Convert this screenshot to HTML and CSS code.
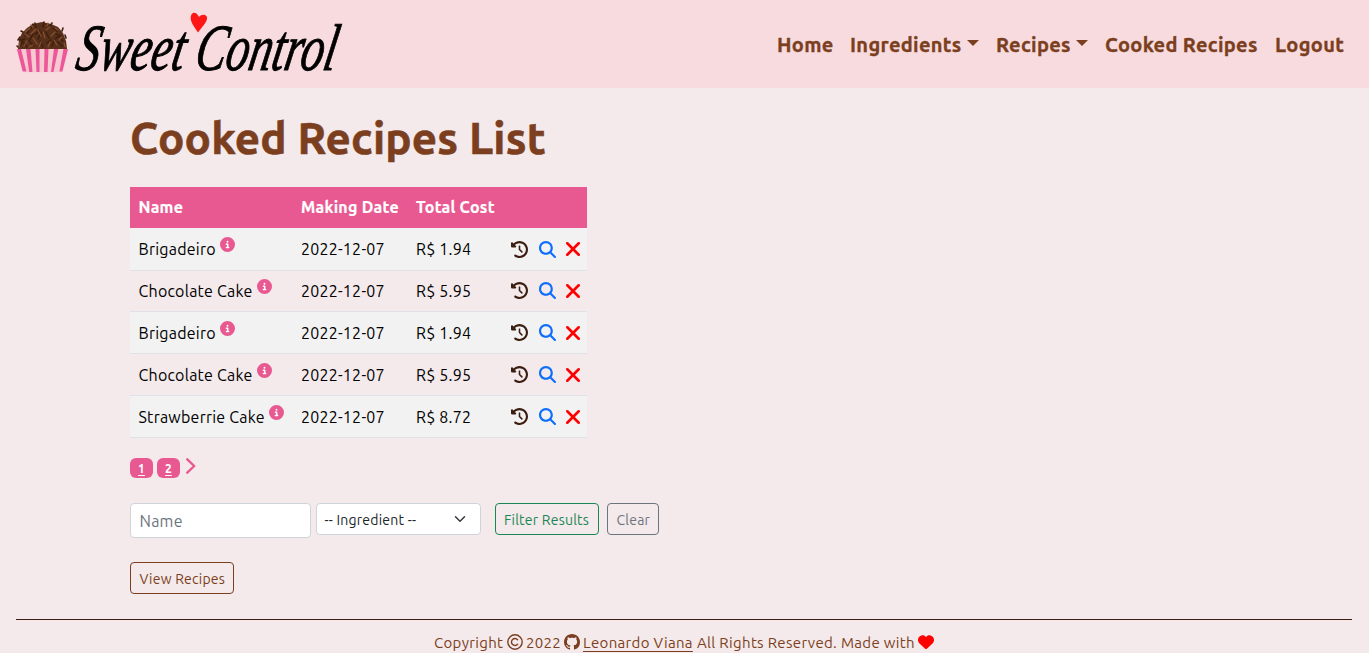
FILE: index.html
```html
<!DOCTYPE html>
<html lang="en">
<head>
<meta charset="utf-8">
<title>Sweet Control</title>
<link rel="stylesheet" href="styles.css">
</head>
<body>
<svg class="sprite" aria-hidden="true">
  <symbol id="history" viewBox="0 0 512 512"><path d="M75 75L41 41C25.9 25.9 0 36.6 0 57.9V168c0 13.3 10.7 24 24 24H134.1c21.4 0 32.1-25.9 17-41l-30.8-30.8C155 85.5 203 64 256 64c106 0 192 86 192 192s-86 192-192 192c-40.8 0-78.6-12.7-109.7-34.4c-14.5-10.1-34.4-6.6-44.6 7.9s-6.6 34.4 7.9 44.6C151.2 495 201.7 512 256 512c141.4 0 256-114.6 256-256S397.4 0 256 0C185.3 0 121.3 28.7 75 75zm181 53c-13.3 0-24 10.7-24 24V256c0 6.4 2.5 12.5 7 17l72 72c9.4 9.4 24.6 9.4 33.9 0s9.4-24.6 0-33.9l-65-65V152c0-13.3-10.7-24-24-24z"/></symbol>
  <symbol id="search" viewBox="0 0 512 512"><path d="M416 208c0 45.900-14.900 88.300-40 122.700L502.600 457.400c12.500 12.500 12.500 32.800 0 45.300s-32.800 12.500-45.300 0L330.700 376c-34.400 25.200-76.800 40-122.700 40C93.100 416 0 322.900 0 208S93.100 0 208 0S416 93.100 416 208zM208 352a144 144 0 1 0 0-288 144 144 0 1 0 0 288z"/></symbol>
  <symbol id="remove" viewBox="0 0 14 14"><path d="M2 2l10 10M12 2L2 12" fill="none" stroke="currentColor" stroke-width="2.300" stroke-linecap="round"/></symbol>
  <symbol id="info" viewBox="0 0 512 512"><path fill="#fff" d="M150 100h212v300H150z"/><path d="M256 512A256 256 0 1 0 256 0a256 256 0 1 0 0 512zM216 336h24V272H216c-13.300 0-24-10.700-24-24s10.700-24 24-24h48c13.300 0 24 10.700 24 24v88h8c13.300 0 24 10.700 24 24s-10.700 24-24 24H216c-13.300 0-24-10.700-24-24s10.700-24 24-24zm40-208a32 32 0 1 1 0 64 32 32 0 1 1 0-64z"/></symbol>
  <symbol id="heart" viewBox="0 0 512 512"><path d="M47.600 300.400L228.300 469.100c7.500 7 17.400 10.900 27.700 10.900s20.200-3.900 27.700-10.900L464.400 300.400c30.400-28.300 47.600-68 47.600-109.500v-5.800c0-69.900-50.500-129.500-119.400-141C347 36.500 300.600 51.400 268 84L256 96 244 84c-32.600-32.600-79-47.500-124.600-39.900C50.500 55.600 0 115.200 0 185.100v5.800c0 41.500 17.200 81.200 47.600 109.500z"/></symbol>
</svg>

<header class="navbar">
  <svg class="logo" width="340" height="88" viewBox="0 0 340 88" role="img" aria-label="Sweet Control">
    <path fill="#58301a" d="M18 49l1-9 3-7 5-5 6-4 9-2 9 2 7 3 5 6 3 8 1 8z"/>
    <g stroke="#3d2010" stroke-width="1.600" stroke-linecap="round">
      <path d="M21 45l2-6M27 47l-4-5M25 36l4-5M31 29l2-5M36 28l-1-5M43 27l1-5M49 28l3-5M57 31l-4-3M61 36l-5-2M65 43l-4-4M20 40l5-1M29 41l4-7M34 46l-5-5M38 39l4-7M43 47l-3-6M49 38l-3-6M52 46l3-7M62 46l-4-4M35 34l5-3M47 43l4-3M56 38l4-2M19 48l-2-2M18 40l2-3M23 32l-2-1M66 38l-1-3M62 31l1-3"/>
    </g>
    <g stroke="#875031" stroke-width="1.200" stroke-linecap="round">
      <path d="M19 48l1-6M24 46l3-5M29 37l-4-3M31 34l5-5M37 44l-4-6M41 36l-3-6M46 30l4-3M45 38l-2-6M51 36l4-4M57 45l-3-5M59 40l3-3M65 47l-1-5M48 47l2-5M29 47l4-2M39 47l2-5M25 32l5-4M55 28l3 2M33 27l-2-2M47 26l1-3"/>
    </g>
    <path fill="#f7c9d1" d="M16.500 49h51.500l-5 22.500-3 .700H26l-3.500-.700z"/>
    <path fill="#ed5699" d="M17 49h4l5.500 22.500h-3.800zM26 49h4.500l2 23h-3.300zM35.500 49h4v23h-3zM44.500 49h4l-1 23h-3.500zM54 49h4.300l-4.800 23H51zM63.500 49H68l-5.600 22.500h-3z"/>
    <g class="wordmark">
      <text transform="translate(74 70) skewX(-11)" font-size="66" textLength="108" lengthAdjust="spacingAndGlyphs">Sweet</text>
      <text transform="translate(193 70) skewX(-11)" font-size="66" textLength="141" lengthAdjust="spacingAndGlyphs">Control</text>
    </g>
    <path fill="#ff1717" d="M198 32.500c-3-5-7-9-7.300-14-.2-7 5.600-8 8.300-1.500 3-4 9-2.500 8 2-.8 4-5 8-9 13.500z"/>
  </svg>
  <nav class="menu">
    <a class="home">Home</a>
    <a class="ingredients">Ingredients<i class="caret"></i></a>
    <a class="recipes">Recipes<i class="caret"></i></a>
    <a class="cooked">Cooked Recipes</a>
    <a class="logout">Logout</a>
  </nav>
</header>

<main class="content">
  <h1>Cooked Recipes List</h1>
  <table class="list">
    <colgroup><col class="c-name"><col class="c-date"><col class="c-cost"><col class="c-actions"></colgroup>
    <thead><tr><th>Name</th><th>Making Date</th><th>Total Cost</th><th></th></tr></thead>
    <tbody>
      <tr><td>Brigadeiro<svg class="info"><use href="#info"/></svg></td><td>2022-12-07</td><td>R$ 1.94</td><td><div class="actions"><svg class="history"><use href="#history"/></svg><svg class="search"><use href="#search"/></svg><svg class="remove"><use href="#remove"/></svg></div></td></tr>
      <tr class="compact"><td>Chocolate Cake<svg class="info"><use href="#info"/></svg></td><td>2022-12-07</td><td>R$ 5.95</td><td><div class="actions"><svg class="history"><use href="#history"/></svg><svg class="search"><use href="#search"/></svg><svg class="remove"><use href="#remove"/></svg></div></td></tr>
      <tr><td>Brigadeiro<svg class="info"><use href="#info"/></svg></td><td>2022-12-07</td><td>R$ 1.94</td><td><div class="actions"><svg class="history"><use href="#history"/></svg><svg class="search"><use href="#search"/></svg><svg class="remove"><use href="#remove"/></svg></div></td></tr>
      <tr><td>Chocolate Cake<svg class="info"><use href="#info"/></svg></td><td>2022-12-07</td><td>R$ 5.95</td><td><div class="actions"><svg class="history"><use href="#history"/></svg><svg class="search"><use href="#search"/></svg><svg class="remove"><use href="#remove"/></svg></div></td></tr>
      <tr><td>Strawberrie Cake<svg class="info"><use href="#info"/></svg></td><td>2022-12-07</td><td>R$ 8.72</td><td><div class="actions"><svg class="history"><use href="#history"/></svg><svg class="search"><use href="#search"/></svg><svg class="remove"><use href="#remove"/></svg></div></td></tr>
    </tbody>
  </table>

  <div class="pages">
    <a class="page">1</a><a class="page">2</a>
    <svg class="next" viewBox="0 0 10 16"><path d="M1.300 1.300L8.200 8l-6.900 6.700" fill="none" stroke="currentColor" stroke-width="2.400" stroke-linecap="round" stroke-linejoin="round"/></svg>
  </div>

  <form class="filters">
    <div class="field"><span>Name</span></div>
    <div class="select"><span>-- Ingredient --</span><svg width="12" height="12" viewBox="0 0 16 16"><path d="M2 5l6 6 6-6" fill="none" stroke="#343a40" stroke-width="2" stroke-linecap="round" stroke-linejoin="round"/></svg></div>
    <button type="button" class="btn filter"><span>Filter Results</span></button>
    <button type="button" class="btn clear"><span>Clear</span></button>
  </form>
  <button type="button" class="btn view"><span>View Recipes</span></button>
</main>

<footer class="footer">
  <span class="f-copy">Copyright</span>
  <svg class="copyright" viewBox="0 0 16 16"><g fill="none" stroke="currentColor"><circle cx="8" cy="8" r="7.200" stroke-width="1.400"/><path d="M10.600 5.700a3.500 3.500 0 1 0 0 4.600" stroke-width="1.400" stroke-linecap="round"/></g></svg>
  <span class="f-year">2022</span>
  <svg class="github" viewBox="0 0 16 16"><path d="M8 0C3.580 0 0 3.580 0 8c0 3.540 2.290 6.530 5.470 7.590.4.070.55-.17.55-.38 0-.19-.01-.82-.01-1.490-2.010.37-2.530-.49-2.690-.94-.09-.23-.48-.94-.82-1.130-.28-.15-.68-.52-.01-.53.63-.01 1.080.58 1.230.82.72 1.210 1.870.87 2.330.66.070-.52.28-.87.51-1.070-1.780-.2-3.640-.89-3.640-3.950 0-.87.31-1.590.82-2.150-.08-.2-.36-1.020.08-2.120 0 0 .67-.21 2.200.82.64-.18 1.320-.27 2-.27s1.360.09 2 .27c1.530-1.040 2.200-.82 2.200-.82.44 1.100.16 1.920.08 2.120.51.56.82 1.270.82 2.150 0 3.070-1.870 3.750-3.650 3.950.29.25.54.73.54 1.480 0 1.070-.01 1.930-.01 2.200 0 .21.15.46.55.38A8.010 8.010 0 0 0 16 8c0-4.420-3.580-8-8-8"/></svg>
  <a class="f-author">Leonardo Viana</a>
  <span class="f-rights">All Rights Reserved. Made with</span>
  <svg class="love"><use href="#heart"/></svg>
</footer>
</body>
</html>
```
FILE: styles.css
```css
* { box-sizing: border-box; }
body {
  margin: 0;
  height: 653px;
  overflow: hidden;
  background: #f4e9eb;
  color: #000;
  font-family: Ubuntu, "Noto Sans", sans-serif;
  font-size: 16px;
  line-height: 24px;
  letter-spacing: .23px;
}
svg { display: block; flex: none; fill: currentColor; }
span, a, th, td { white-space: nowrap; }
.sprite { width: 0; height: 0; position: absolute; }

.navbar {
  height: 88px;
  padding-right: 25px;
  display: flex;
  justify-content: space-between;
  background: #f8dbdf;
}
.logo { overflow: visible; }
.wordmark { font-family: "Liberation Serif", serif; font-style: italic; letter-spacing: 0; fill: #000; stroke: #000; stroke-width: 1px; }
.menu {
  display: flex;
  padding-top: 30px;
  gap: 17px;
  color: #7b3f20;
  font-size: 20px;
  font-weight: 700;
  line-height: 30px;
  letter-spacing: .33px;
  -webkit-text-stroke: .35px currentColor;
}
.menu a { display: flex; }
.home { width: 56px; }
.ingredients { width: 129px; }
.recipes { width: 92px; }
.cooked { width: 153px; }
.logout { width: 69px; }
.caret {
  margin: 10px 0 0 auto;
  width: 12px;
  height: 6px;
  border: 6px solid transparent;
  border-top-color: currentColor;
  border-bottom: 0;
}

.content { padding: 20px 130px 0; height: 531px; }
h1 {
  margin: 0 0 19px;
  height: 60px;
  font-size: 44px;
  line-height: 60px;
  letter-spacing: .18px;
  -webkit-text-stroke: .6px currentColor;
  color: #7b3f20;
}
.list { width: 457px; table-layout: fixed; border-collapse: collapse; }
.c-name { width: 162.5px; }
.c-date { width: 115px; }
.c-cost { width: 95px; }
.c-actions { width: 84.5px; }
.list th { height: 41px; padding: 0 8.5px 2px; background: #e95991; color: #fff; text-align: left; letter-spacing: .25px; -webkit-text-stroke: .2px currentColor; }
.list td { height: 42px; padding: 1px 8.5px 0; border-bottom: 1px solid #dee2e6; }
.list .compact td { height: 41px; padding-top: 0; }
.list tbody tr:nth-child(odd) { background: #f2f2f2; }
.list td .info { display: inline-block; margin-left: 4px; width: 15px; height: 15px; vertical-align: 3px; color: #e95991; }
.actions { display: flex; align-items: center; }
.history { width: 17px; height: 17px; color: #3b1e10; }
.search { width: 17px; height: 17px; margin-left: 10.5px; color: #0d6efd; }
.remove { width: 16px; height: 16px; margin-left: 9.5px; color: #f00; }

.pages { display: flex; gap: 4px; margin-top: 20px; height: 20px; color: #e95991; }
.page {
  width: 23px;
  height: 20px;
  border-radius: 6px;
  background: #e95991;
  color: #fff;
  font-size: 12px;
  font-weight: 700;
  line-height: 21px;
  letter-spacing: 0;
  text-align: center;
  text-decoration: underline;
  text-underline-offset: 2px;
}
.next { width: 10px; height: 16px; margin-left: 2px; }

.filters { display: flex; margin-top: 25px; height: 35px; }
.field { width: 181px; height: 35px; padding: 5px 8.5px; border: 1px solid #ced4da; border-radius: 4px; background: #fff; color: #6c757d; }
.select {
  width: 165px;
  height: 32px;
  margin-left: 5px;
  padding: 0 14px 0 7.5px;
  display: flex;
  align-items: center;
  justify-content: space-between;
  border: 1px solid #ced4da;
  border-radius: 4px;
  background: #fff;
  color: #212529;
  font-size: 14px;
}
.select span { padding-top: 2px; }
.btn {
  display: block;
  height: 32px;
  padding: 0 8px;
  border: 1px solid currentColor;
  border-radius: 4px;
  background: transparent;
  font-family: inherit;
  font-size: 14px;
  line-height: 32px;
  letter-spacing: .23px;
  text-align: left;
}
.filter { width: 104px; margin-left: 14px; color: #198754; }
.clear { width: 52px; margin-left: 8px; padding-left: 8.5px; color: #6c757d; }
.view { width: 104px; margin-top: 24px; padding-left: 8.5px; color: #7b3f20; }

.footer {
  margin: 0 17px 0 16px;
  height: 34px;
  padding-left: 418px;
  display: flex;
  border-top: 1px solid #3b1e10;
  color: #7b3f20;
  font-size: 15px;
  line-height: 46px;
  letter-spacing: .33px;
}
.footer svg { margin-top: 14px; width: 16px; height: 16px; }
.f-copy { width: 70px; }
.f-copy + svg { margin-left: 3px; }
.f-year { width: 35px; margin-left: 3px; }
.f-year + svg { margin-left: 3px; }
.f-author { width: 110px; height: 32px; margin-left: 3px; text-decoration: underline; text-underline-offset: 3px; }
.f-rights { width: 217px; margin-left: 4px; }
.footer .love { margin-left: 4px; color: #f00; }
```
